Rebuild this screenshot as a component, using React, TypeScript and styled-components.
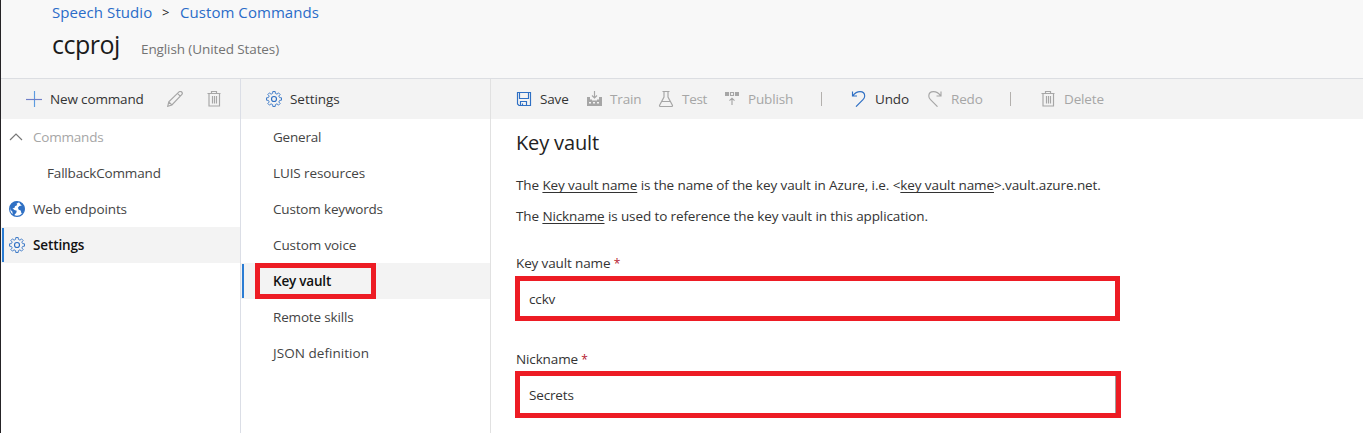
import React from "react";
import styled, { createGlobalStyle } from "styled-components";

const GlobalStyle = createGlobalStyle`
  *, *::before, *::after { box-sizing: border-box; }
  body {
    margin: 0;
    background: #fff;
    color: #333;
    font-family: "Segoe UI", "Open Sans", "Noto Sans", sans-serif;
    font-size: 13.5px;
    overflow: hidden;
  }
`;

const Page = styled.div`
  display: flex;
  flex-direction: column;
  height: 433px;
  border-left: 1px solid #252326;
`;

const Header = styled.header`
  flex: none;
  height: 79px;
  padding: 0 0 0 51px;
  background: #f8f8f8;
  border-bottom: 1px solid #dcdee2;
`;

const Breadcrumb = styled.nav`
  display: flex;
  align-items: center;
  height: 24px;
  font-size: 15px;
  white-space: pre;
`;

const Crumb = styled.a<{ $width: number; $ls: number }>`
  width: ${(p) => p.$width}px;
  color: #2a6cc8;
  letter-spacing: ${(p) => p.$ls}px;
`;

const Chevron = styled.span`
  width: 18px;
  color: #222;
  font-size: 13px;
`;

const TitleRow = styled.div`
  display: flex;
  align-items: baseline;
  height: 41px;
  line-height: 41px;
`;

const Project = styled.h1`
  margin: 0;
  width: 89px;
  font-size: 25px;
  font-weight: 400;
  color: #1b1b1b;
  letter-spacing: -0.5px;
`;

const Locale = styled.span`
  color: #737373;
  letter-spacing: -0.1px;
`;

const Columns = styled.div`
  flex: 1;
  display: flex;
  min-height: 0;
`;

const Panel = styled.aside<{ $width: number; $line: string }>`
  flex: none;
  width: ${(p) => p.$width}px;
  border-right: 1px solid ${(p) => p.$line};
`;

const Main = styled.main`
  flex: 1;
`;

const Bar = styled.div`
  display: flex;
  align-items: center;
  height: 40px;
  padding-left: 25px;
  background: #f3f3f3;
`;

const Tool = styled.div<{ $width: number; $off?: boolean }>`
  flex: none;
  display: flex;
  align-items: center;
  gap: 8px;
  width: ${(p) => p.$width}px;
  color: ${(p) => (p.$off ? "#a6a6a6" : "#333")};
  white-space: nowrap;
`;

const ToolText = styled.span<{ $ls?: number }>`
  letter-spacing: ${(p) => p.$ls ?? -0.15}px;
`;

const Divider = styled.div<{ $space: number }>`
  flex: none;
  width: 1px;
  height: 14px;
  margin-right: ${(p) => p.$space}px;
  background: #b3b0ad;
`;

const Row = styled.div<{ $indent: number; $active?: boolean; $muted?: boolean; $ls?: number }>`
  position: relative;
  display: flex;
  align-items: center;
  gap: 8px;
  height: 36px;
  padding-left: ${(p) => p.$indent}px;
  color: ${(p) => (p.$active ? "#111" : p.$muted ? "#a6a6a6" : "#444")};
  font-weight: ${(p) => (p.$active ? 600 : 400)};
  letter-spacing: ${(p) => p.$ls ?? -0.1}px;
  background: ${(p) => (p.$active ? "#f3f3f3" : "transparent")};

  &::before {
    content: "";
    display: ${(p) => (p.$active ? "block" : "none")};
    position: absolute;
    left: 1px;
    top: 1px;
    width: 2px;
    height: 34px;
    background: #2b7cd3;
  }
`;

const Highlight = styled.div`
  position: absolute;
  left: 14px;
  top: 0;
  width: 121px;
  height: 36px;
  border: 5px solid #ed1c24;
`;

const Content = styled.div`
  padding: 8px 0 0 25px;
`;

const Heading = styled.h2`
  margin: 0;
  font-size: 20px;
  font-weight: 400;
  line-height: 32px;
  color: #222;
  letter-spacing: -0.15px;
`;

const Note = styled.p<{ $top: number; $ls: number }>`
  margin: ${(p) => p.$top}px 0 0;
  line-height: 20px;
  letter-spacing: ${(p) => p.$ls}px;
  white-space: nowrap;

  u { text-underline-offset: 2px; text-decoration-thickness: 1px; text-decoration-skip-ink: none; }
`;

const FieldLabel = styled.label<{ $top: number }>`
  display: block;
  height: 20px;
  margin-top: ${(p) => p.$top}px;
  line-height: 20px;
  letter-spacing: -0.13px;

  span { color: #b5172f; font-size: 12px; line-height: 1; }
`;

const Field = styled.div<{ $width: number; $height: number; $top: number; $edge?: boolean }>`
  display: flex;
  align-items: center;
  width: ${(p) => p.$width}px;
  height: ${(p) => p.$height}px;
  margin: ${(p) => p.$top}px 0 0 -1px;
  padding-left: 9px;
  border: 5px solid #ed1c24;
  box-shadow: ${(p) => (p.$edge ? "inset -1px 0 #a19f9d" : "none")};
  letter-spacing: -0.15px;
`;

const Icon = styled.svg`
  flex: none;
  width: 16px;
  height: 16px;
  fill: none;
  stroke: currentColor;
  stroke-width: 1.15;
`;

const BlueIcon = styled(Icon)`
  color: #2f70c4;
`;

const teeth = Array.from({ length: 8 }, (_, i) => {
  const at = (r: number, deg: number) => {
    const a = ((i * 45 + deg) * Math.PI) / 180;
    return `${(8 + r * Math.sin(a)).toFixed(2)} ${(8 - r * Math.cos(a)).toFixed(2)}`;
  };
  return `${i ? "L" : "M"}${at(5.9, -13)} L${at(7.6, -9)} L${at(7.6, 9)} L${at(5.9, 13)} L${at(5.5, 22)}`;
}).join(" ");

const Gear = () => (
  <BlueIcon viewBox="0 0 16 16">
    <path d={`${teeth}Z`} strokeWidth=".9" />
    <circle cx="8" cy="8" r="2.5" />
  </BlueIcon>
);

const Plus = () => (
  <BlueIcon viewBox="0 0 16 16">
    <path d="M8.5 0v16" stroke="#5b9be0" />
    <path d="M0 8.5h16" stroke="#6f7fc8" />
  </BlueIcon>
);

const Pencil = () => (
  <Icon viewBox="0 0 16 16">
    <path d="M.7 15.3l1.1-4.4L12 .9c.9-.7 2-.6 2.700.1s.8 1.900 0 2.700L4.900 14 .7 15.300zM10.500 2.300l3 3M1.800 10.900l3.100 3.100" />
  </Icon>
);

const Trash = () => (
  <Icon viewBox="0 0 16 16">
    <path d="M1.500 2.500h13M5.500 2.500v-2h5v2M3 2.500v12.500h10.500v-12.500M6.500 5v7.500M8.500 5v7.500M10.500 5v7.500" />
  </Icon>
);

const Save = () => (
  <BlueIcon viewBox="0 0 16 16">
    <path d="M1.500 1.500h13v13h-11.500l-1.500-1.500zM3.500 1.500v6h9v-6M4.500 14.500v-4h6v4M6.500 14.500v-2" />
  </BlueIcon>
);

const Train = () => (
  <Icon viewBox="0 0 16 16">
    <path d="M8.500 0v7M6 4.500l2.500 2.500l2.500-2.500" />
    <path
      d="M1 6h3v2.500h2v1h5v-1h2v-2.500h3v9h-15zM3 11v1.500h2v-1.500zM7 11v1.500h2v-1.500zM11 11v1.500h2v-1.500z"
      fill="currentColor"
      fillRule="evenodd"
      stroke="none"
    />
  </Icon>
);

const Flask = () => (
  <Icon viewBox="0 0 16 16">
    <path d="M4.500.5h7M6 .5v5.500L1.600 14.300q-.4 1.200.9 1.200h11q1.300 0 .9-1.200L10 6V.5M4 10.500h8" />
  </Icon>
);

const Publish = () => (
  <Icon viewBox="0 0 16 16">
    <path d="M1 1h4v4h-4zM11 1h4v4h-4z" fill="currentColor" stroke="none" />
    <path d="M6.500 1.500h3v3h-3zM8 14V7.500M5.500 9.700L8 7.200l2.500 2.500" />
  </Icon>
);

const undoPath = "M1.500 .5v4.500h4.500M1.700 4.800C4 1.800 6.400 .6 9 .6c3 0 4.700 2 4.700 4.500c0 1.500-.7 2.600-1.700 3.600L5 15.700";

const Undo = () => (
  <BlueIcon viewBox="0 0 16 16">
    <path d={undoPath} />
  </BlueIcon>
);

const Redo = () => (
  <Icon viewBox="0 0 16 16">
    <path d={undoPath} transform="translate(15.500) scale(-1 1)" />
  </Icon>
);

const Caret = () => (
  <Icon viewBox="0 0 16 16">
    <path d="M1 11l6-6 6 6" stroke="#777" />
  </Icon>
);

const Globe = () => (
  <BlueIcon viewBox="0 0 16 16">
    <circle cx="8" cy="8" r="7.400" />
    <path
      d="M1 5.500C2 2.500 4.500.5 8 .5l1.500 1-2 1.200.8 1.300-2.300 1.200-.6 1.800-2 .3 2 1.700 2.400.8-.6 2.200-1.400 1.300-.4 2-1.700-1.200-.3-3.300L1.300 8.500zM10.500 1l3 2 1.800 3.500v3.200l-1.500 2.600-1.300.2-.8-3-2-.7-.8-2 1.500-1.900 2.400-.3-1.800-1.500z"
      fill="currentColor"
      stroke="none"
    />
  </BlueIcon>
);

export default function App() {
  return (
    <Page>
      <GlobalStyle />
      <Header>
        <Breadcrumb>
          <Crumb $width={110} $ls={0.08}>Speech Studio</Crumb>
          <Chevron>&gt;</Chevron>
          <Crumb $width={150} $ls={0.06}>Custom Commands</Crumb>
        </Breadcrumb>
        <TitleRow>
          <Project>ccproj</Project>
          <Locale>English (United States)</Locale>
        </TitleRow>
      </Header>
      <Columns>
        <Panel $width={240} $line="#dbdee6">
          <Bar>
            <Tool $width={141}>
              <Plus />
              <ToolText>New command</ToolText>
            </Tool>
            <Tool $width={39} $off><Pencil /></Tool>
            <Tool $width={16} $off><Trash /></Tool>
          </Bar>
          <Row $indent={8} $muted $ls={-0.2}><Caret />Commands</Row>
          <Row $indent={46} $ls={-0.17}>FallbackCommand</Row>
          <Row $indent={8}><Globe />Web endpoints</Row>
          <Row $indent={8} $active $ls={-0.12}><Gear />Settings</Row>
        </Panel>
        <Panel $width={250} $line="#e1e1e1">
          <Bar>
            <Tool $width={100}><Gear /><ToolText $ls={-0.05}>Settings</ToolText></Tool>
          </Bar>
          <Row $indent={32} $ls={-0.2}>General</Row>
          <Row $indent={32}>LUIS resources</Row>
          <Row $indent={32} $ls={-0.17}>Custom keywords</Row>
          <Row $indent={32}>Custom voice</Row>
          <Row $indent={32} $active $ls={-0.2}>Key vault<Highlight /></Row>
          <Row $indent={32} $ls={-0.17}>Remote skills</Row>
          <Row $indent={32} $ls={0.05}>JSON definition</Row>
        </Panel>
        <Main>
          <Bar>
            <Tool $width={70}><Save /><ToolText>Save</ToolText></Tool>
            <Tool $width={72} $off><Train /><ToolText>Train</ToolText></Tool>
            <Tool $width={66} $off><Flask /><ToolText $ls={-0.3}>Test</ToolText></Tool>
            <Tool $width={97} $off><Publish /><ToolText>Publish</ToolText></Tool>
            <Divider $space={29} />
            <Tool $width={76}><Undo /><ToolText>Undo</ToolText></Tool>
            <Tool $width={83} $off><Redo /><ToolText>Redo</ToolText></Tool>
            <Divider $space={29} />
            <Tool $width={70} $off><Trash /><ToolText>Delete</ToolText></Tool>
          </Bar>
          <Content>
            <Heading>Key vault</Heading>
            <Note $top={16} $ls={-0.1}>
              The <u>Key vault name</u> is the name of the key vault in Azure, i.e. &lt;<u>key vault name</u>&gt;.vault.azure.net.
            </Note>
            <Note $top={11} $ls={-0.11}>
              The <u>Nickname</u> is used to reference the key vault in this application.
            </Note>
            <FieldLabel $top={27}>Key vault name <span>*</span></FieldLabel>
            <Field $width={605} $height={45} $top={3}>cckv</Field>
            <FieldLabel $top={28}>Nickname <span>*</span></FieldLabel>
            <Field $width={606} $height={47} $top={2} $edge>Secrets</Field>
          </Content>
        </Main>
      </Columns>
    </Page>
  );
}
